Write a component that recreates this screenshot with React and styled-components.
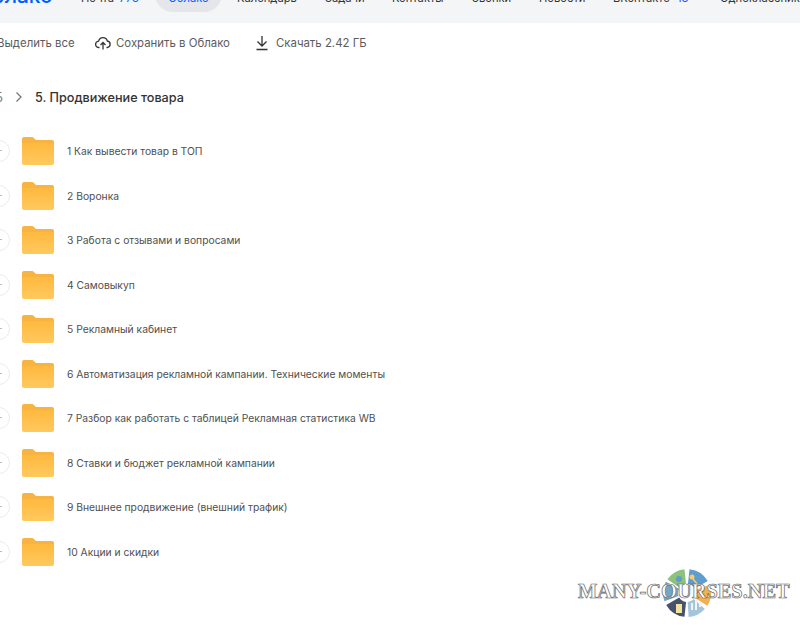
import React from 'react';
import styled, { createGlobalStyle } from 'styled-components';

const GlobalStyle = createGlobalStyle`
  html, body {
    margin: 0;
    padding: 0;
    background: #fff;
    overflow: hidden;
  }
`;

const Page = styled.div`
  width: 800px;
  height: 625px;
  overflow: hidden;
  position: relative;
  font-family: "Inter", "Noto Sans", sans-serif;
  color: #333;
`;

const TopBar = styled.header`
  height: 23px;
  background: #f4f5f7;
  display: flex;
  align-items: flex-start;
  overflow: hidden;
  white-space: nowrap;
`;

const Logo = styled.div`
  width: 105px;
  flex: none;
  margin: -18px 0 0 -24px;
  line-height: 28px;
  font-size: 21px;
  font-weight: 500;
  color: #005ff9;
`;

const NavItem = styled.div`
  flex: none;
  width: ${p => p.$w}px;
  margin: -10px 0 0 ${p => p.$gap || 0}px;
  font-size: 11.2px;
  line-height: 16px;
  color: #333;
`;

const ActiveNavItem = styled(NavItem)`
  height: 22px;
  background: #e4e6e9;
  border-radius: 0 0 18px 18px;
  color: #005ff9;
  text-align: center;
`;

const Count = styled.span`
  color: #005ff9;
  margin-left: ${p => p.$gap || 0}px;
`;

const Actions = styled.div`
  height: 40px;
  display: flex;
  align-items: center;
  font-size: 11.4px;
  color: #5c5c5c;
`;

const Action = styled.div`
  display: flex;
  align-items: center;
  gap: ${p => p.$iconGap || 0}px;
  flex: none;
  width: ${p => p.$w}px;
  margin-left: ${p => p.$gap || 0}px;
  white-space: nowrap;
`;

const Crumbs = styled.div`
  display: flex;
  align-items: center;
  height: 20px;
  margin-top: 24px;
  font-size: 12.65px;
  font-weight: 500;
  color: #333;
`;

const CrumbPrev = styled.span`
  width: 3px;
  overflow: hidden;
  color: #777;
  font-weight: 400;
  direction: rtl;
`;

const Chevron = styled.svg`
  width: 10px;
  height: 12px;
  margin: 0 11px 0 11px;
`;

const List = styled.div`
  margin-top: 22px;
  display: flex;
  flex-direction: column;
`;

const Row = styled.div`
  height: 44.5px;
  display: flex;
  align-items: center;
  font-size: 10.3px;
  color: #505050;
  white-space: nowrap;
`;

const Check = styled.div`
  width: 20px;
  height: 20px;
  margin-left: -12px;
  flex: none;
  border: 1px solid #ececec;
  border-radius: 50%;
  position: relative;
  &::after {
    content: '';
    position: absolute;
    right: 7px;
    top: 9px;
    width: 2px;
    height: 1px;
    background: #bbb;
  }
`;

const FolderIcon = styled.svg`
  width: 32px;
  height: 28px;
  margin: 0 13px 0 12px;
  flex: none;
`;

const Watermark = styled.div`
  position: absolute;
  left: 578px;
  top: 568px;
  width: 214px;
  height: 50px;
`;

const WatermarkLogo = styled.svg`
  position: absolute;
  left: 84px;
  top: 0;
  width: 50px;
  height: 50px;
`;

const WatermarkText = styled.div`
  position: absolute;
  left: 0;
  top: 12px;
  font-family: "Liberation Serif", serif;
  font-size: 20.400px;
  font-weight: 700;
  color: #fff;
  -webkit-text-stroke: 0.7px #666;
  white-space: nowrap;
`;

const folders = [
  '1 Как вывести товар в ТОП',
  '2 Воронка',
  '3 Работа с отзывами и вопросами',
  '4 Самовыкуп',
  '5 Рекламный кабинет',
  '6 Автоматизация рекламной кампании. Технические моменты',
  '7 Разбор как работать с таблицей Рекламная статистика WB',
  '8 Ставки и бюджет рекламной кампании',
  '9 Внешнее продвижение (внешний трафик)',
  '10 Акции и скидки',
];

// сегменты круглого логотипа на водяном знаке
const wedges = [
  { from: -55, to: -6, color: '#8cc27a' },
  { from: 6, to: 60, color: '#5f9ccf' },
  { from: 70, to: 122, color: '#f2b04f' },
  { from: 132, to: 176, color: '#a5c5da' },
  { from: 186, to: 240, color: '#46536b' },
  { from: 250, to: 298, color: '#6fa7c7' },
];

function polar(deg, r) {
  const a = (deg * Math.PI) / 180;
  return `${(25 + r * Math.sin(a)).toFixed(2)} ${(25 - r * Math.cos(a)).toFixed(2)}`;
}

function wedgePath({ from, to }) {
  return `M${polar(from, 9)}L${polar(from, 24)}A24 24 0 0 1 ${polar(to, 24)}L${polar(to, 9)}A9 9 0 0 0 ${polar(from, 9)}Z`;
}

function Folder() {
  return (
    <FolderIcon viewBox="0 0 32 28">
      <defs>
        <linearGradient id="folderFront" x1="0" y1="0" x2="0" y2="1">
          <stop offset="0" stopColor="#ffb93f" />
          <stop offset="1" stopColor="#ffc95e" />
        </linearGradient>
      </defs>
      <path d="M0 2a2 2 0 0 1 2-2h7.500c1.500 0 2.200.6 3 1.500L14 3h16a2 2 0 0 1 2 2v5H0z" fill="#f8b443" />
      <path d="M0 6h32v20a2 2 0 0 1-2 2H2a2 2 0 0 1-2-2z" fill="url(#folderFront)" />
    </FolderIcon>
  );
}

export default function App() {
  return (
    <Page>
      <GlobalStyle />
      <TopBar>
        <Logo>Облако</Logo>
        <NavItem $w={74}>Почта <Count $gap={2}>773</Count></NavItem>
        <ActiveNavItem $w={67}>Облако</ActiveNavItem>
        <NavItem $gap={15} $w={88}>Календарь</NavItem>
        <NavItem $w={67}>Задачи</NavItem>
        <NavItem $w={80}>Контакты</NavItem>
        <NavItem $w={67}>Звонки</NavItem>
        <NavItem $w={74}>Новости</NavItem>
        <NavItem $w={107}>ВКонтакте <Count $gap={4}>13</Count></NavItem>
        <NavItem $w={90}>Одноклассники</NavItem>
      </TopBar>
      <Actions>
        <Action $gap={-3} $w={98}>Выделить все</Action>
        <Action $w={160} $iconGap={5}>
          <svg width="16" height="16" viewBox="0 0 16 16" fill="none" stroke="#333" strokeWidth="1.300">
            <path d="M4.500 12.500H4a3.200 3.200 0 0 1-.4-6.400A4.500 4.500 0 0 1 12.300 6a3.300 3.300 0 0 1 .2 6.500H11.500" />
            <path d="M8 14.500V7.500M5.500 10 8 7.500 10.500 10" />
          </svg>
          Сохранить в Облако
        </Action>
        <Action $iconGap={7}>
          <svg width="14" height="16" viewBox="0 0 14 16" fill="none" stroke="#333" strokeWidth="1.300">
            <path d="M7 1v10M2.500 6.500 7 11l4.500-4.500M1.500 14.500h11" />
          </svg>
          Скачать 2.42 ГБ
        </Action>
      </Actions>
      <Crumbs>
        <CrumbPrev>Б</CrumbPrev>
        <Chevron viewBox="0 0 10 12" fill="none" stroke="#777" strokeWidth="1.300">
          <path d="M2.500 1.500 7 6l-4.500 4.500" />
        </Chevron>
        5. Продвижение товара
      </Crumbs>
      <List>
        {folders.map(name => (
          <Row key={name}>
            <Check />
            <Folder />
            {name}
          </Row>
        ))}
      </List>
      <Watermark>
        <WatermarkLogo viewBox="0 0 50 50">
          {wedges.map(w => (
            <path key={w.from} d={wedgePath(w)} fill={w.color} />
          ))}
          <circle cx="17" cy="11" r="3" fill="#5f9ccf" />
          <circle cx="30" cy="9" r="2.500" fill="#f3cf6b" />
          <path d="M31 11l5 6" stroke="#f3cf6b" strokeWidth="1.500" />
          <rect x="14" y="36" width="6" height="9" fill="#f3e3a0" />
          <path d="M30 42v-7M34 42v-10M38 39v-5" stroke="#f4f4f4" strokeWidth="2" />
        </WatermarkLogo>
        <WatermarkText>MANY-COURSES.NET</WatermarkText>
      </Watermark>
    </Page>
  );
}
